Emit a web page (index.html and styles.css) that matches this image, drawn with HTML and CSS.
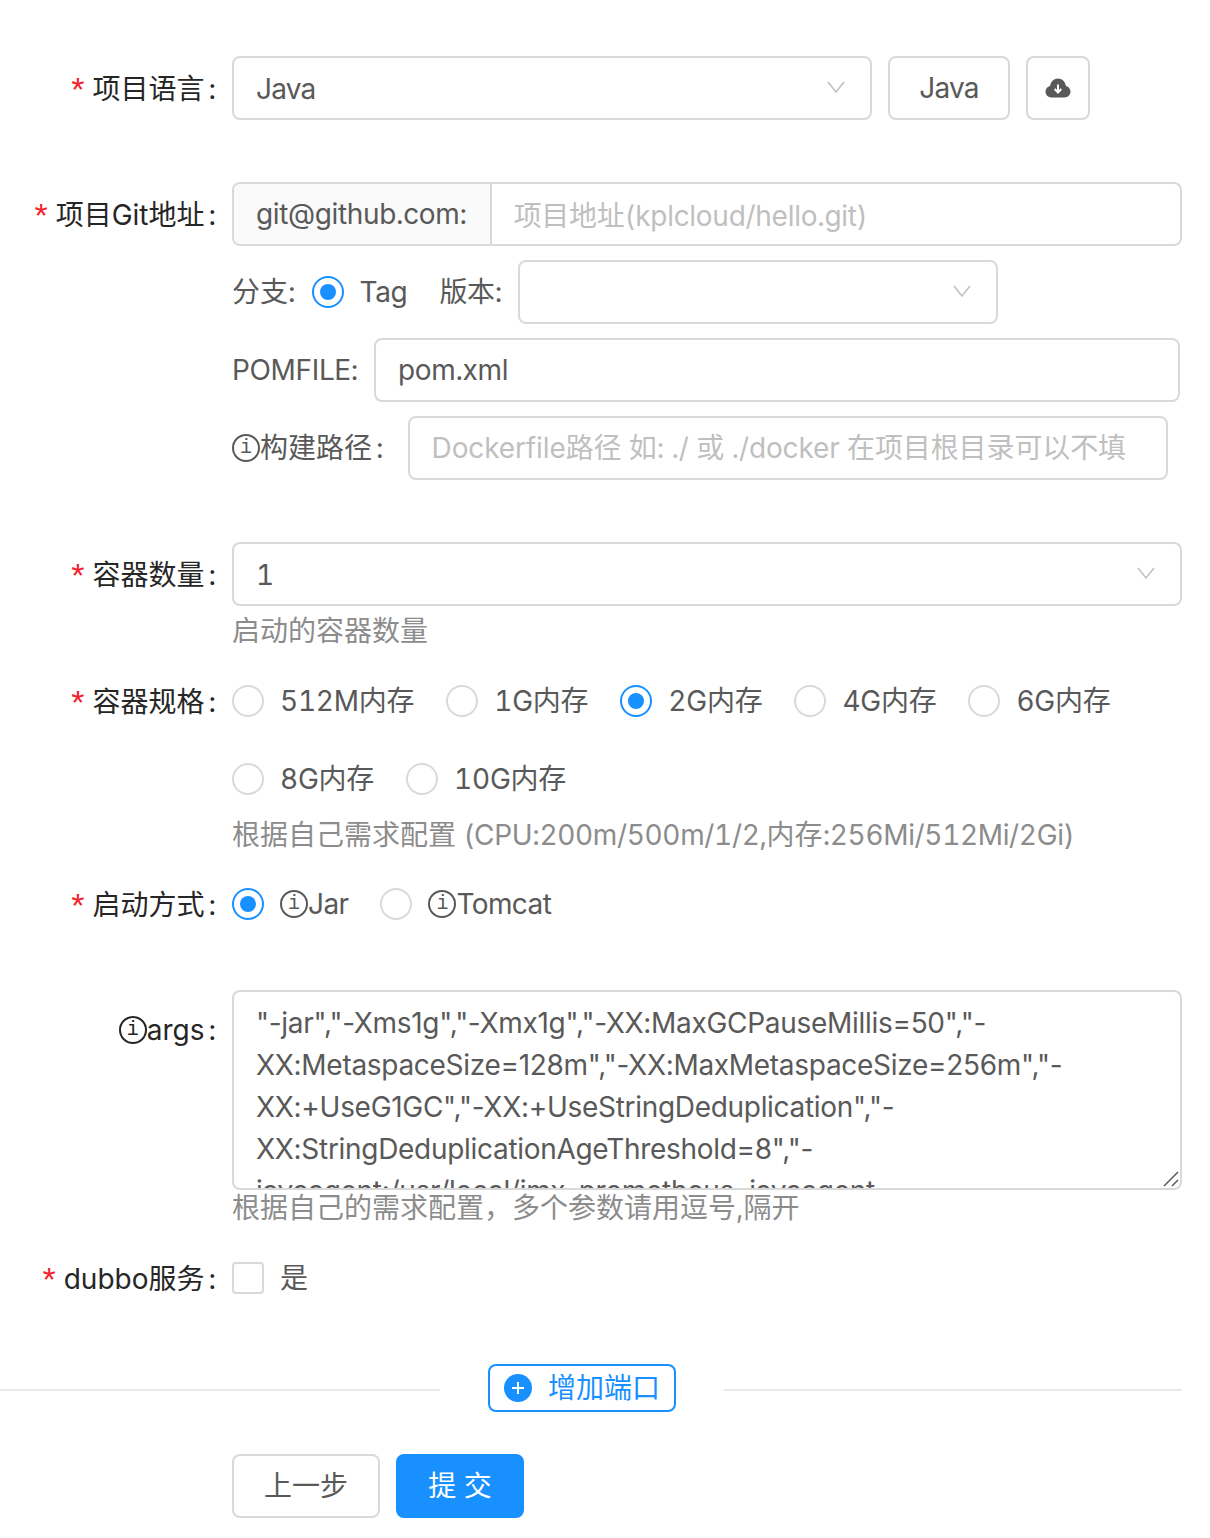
FILE: index.html
```html
<!DOCTYPE html>
<html lang="en">
<head>
    <meta charset="UTF-8">
    <meta name="viewport" content="width=device-width, initial-scale=1.0">
    <title>部署配置</title>
    <link rel="stylesheet" href="styles.css">
</head>
<body>

    <form class="form">
        <!-- 项目语言 -->
        <div class="item">
            <label class="item-label required">项目语言<span class="colon">:</span></label>
            <div class="item-control row">
                <div class="select select-lang">
                    <span class="java">Java</span>
                    <svg class="arrow" viewBox="0 0 18 12"><polyline points="1 1 9 11 17 1"></polyline></svg>
                </div>
                <button type="button" class="btn btn-lang"><span class="java">Java</span></button>
                <button type="button" class="btn btn-icon" aria-label="download">
                    <svg class="cloud" viewBox="0 0 26 20">
                        <path class="cloud-body" d="M6.5 19.5C3 19.5 .5 16.8 .5 13.6c0-2.8 1.9-5 4.5-5.6C5.8 3.6 9 .5 13 .5s7.2 3.1 8 7.5c2.6.6 4.5 2.8 4.5 5.6 0 3.2-2.5 5.900-6 5.900z"></path>
                        <path class="cloud-arrow" d="M13 6.500v7.500M9.700 11 13 14.500 16.300 11"></path>
                    </svg>
                </button>
            </div>
        </div>

        <!-- Git 地址 -->
        <div class="item">
            <label class="item-label required">项目Git地址<span class="colon">:</span></label>
            <div class="item-control stack">
                <div class="input-group">
                    <span class="addon tight">git@github.com:</span>
                    <input class="input" type="text" placeholder="项目地址(kplcloud/hello.git)">
                </div>
                <div class="row">
                    <span class="inline-label">分支:</span>
                    <span class="radio checked"><i></i><span class="tight">Tag</span></span>
                    <span class="inline-label version-label tight">版本:</span>
                    <div class="select select-version">
                        <span></span>
                        <svg class="arrow" viewBox="0 0 18 12"><polyline points="1 1 9 11 17 1"></polyline></svg>
                    </div>
                </div>
                <div class="row">
                    <span class="inline-label tight">POMFILE:</span>
                    <input class="input pom-input tight" type="text" value="pom.xml">
                </div>
                <div class="row">
                    <span class="inline-label build-label"><span class="info">i</span>构建路径<span class="colon">:</span></span>
                    <input class="input build-input" type="text" placeholder="Dockerfile路径 如: ./ 或 ./docker 在项目根目录可以不填">
                </div>
            </div>
        </div>

        <!-- 容器数量 -->
        <div class="item item-count">
            <label class="item-label required">容器数量<span class="colon">:</span></label>
            <div class="item-control">
                <div class="select">
                    <span>1</span>
                    <svg class="arrow" viewBox="0 0 18 12"><polyline points="1 1 9 11 17 1"></polyline></svg>
                </div>
                <div class="help">启动的容器数量</div>
            </div>
        </div>

        <!-- 容器规格 -->
        <div class="item item-spec">
            <label class="item-label required">容器规格<span class="colon">:</span></label>
            <div class="item-control">
                <div class="radio-group spec-group">
                    <span class="radio"><i></i>512M内存</span>
                    <span class="radio"><i></i>1G内存</span>
                    <span class="radio checked"><i></i>2G内存</span>
                    <span class="radio"><i></i>4G内存</span>
                    <span class="radio"><i></i>6G内存</span>
                    <span class="radio"><i></i>8G内存</span>
                    <span class="radio"><i></i>10G内存</span>
                </div>
                <div class="help help-spec">根据自己需求配置 <span class="tight">(CPU:200m/500m/1/2,</span>内存<span class="tight">:256Mi/512Mi/2Gi)</span></div>
            </div>
        </div>

        <!-- 启动方式 -->
        <div class="item item-start">
            <label class="item-label required">启动方式<span class="colon">:</span></label>
            <div class="item-control">
                <div class="radio-group start-group">
                    <span class="radio checked"><i></i><span class="info">i</span>Jar</span>
                    <span class="radio"><i></i><span class="info">i</span>Tomcat</span>
                </div>
            </div>
        </div>

        <!-- args -->
        <div class="item item-args">
            <label class="item-label"><span class="info">i</span>args<span class="colon">:</span></label>
            <div class="item-control">
                <div class="textarea-wrap">
                    <textarea class="textarea">"-jar","-Xms1g","-Xmx1g","-XX:MaxGCPauseMillis=50","-XX:MetaspaceSize=128m","-XX:MaxMetaspaceSize=256m","-XX:+UseG1GC","-XX:+UseStringDeduplication","-XX:StringDeduplicationAgeThreshold=8","-javaagent:/usr/local/jmx_prometheus_javaagent-0.12.0.jar=9136:/etc/jmx.yaml"</textarea>
                    <svg class="grip" viewBox="0 0 16 16"><path d="M1 15 15 1M9 15l6-6"></path></svg>
                </div>
                <div class="help help-args">根据自己的需求配置，多个参数请用逗号,隔开</div>
            </div>
        </div>

        <!-- dubbo -->
        <div class="item item-dubbo">
            <label class="item-label required">dubbo服务<span class="colon">:</span></label>
            <div class="item-control">
                <span class="checkbox"><i></i>是</span>
            </div>
        </div>

        <!-- 端口 -->
        <div class="divider">
            <span class="divider-line divider-left"></span>
            <button type="button" class="btn-dashed">
                <svg class="plus" viewBox="0 0 28 28">
                    <circle cx="14" cy="14" r="14"></circle>
                    <path d="M14 8v12M8 14h12"></path>
                </svg>
                增加端口
            </button>
            <span class="divider-line"></span>
        </div>

        <div class="actions">
            <button type="button" class="btn btn-prev">上一步</button>
            <button type="button" class="btn btn-primary">提 交</button>
        </div>
    </form>

</body>
</html>
```

FILE: styles.css
```css
/* Base */
* {
    box-sizing: border-box;
}

body {
    margin: 0;
    background: #fff;
    color: #595959;
    font-family: "Inter", "Noto Sans CJK SC", sans-serif;
    font-size: 28px;
    font-variant-numeric: tabular-nums;
    line-height: 42px;
}

.form {
    width: 1182px;
    padding-top: 56px;
}

.tight {
    letter-spacing: -0.35px;
}

.java {
    letter-spacing: -0.8px;
}

/* Form items */
.item {
    display: flex;
    margin-bottom: 62px;
}

.item.item-count {
    margin-bottom: 17px;
}

.item.item-spec {
    margin-bottom: 16px;
}

.item.item-start {
    margin-bottom: 54px;
}

.item.item-args {
    margin-bottom: 17px;
}

.item.item-dubbo {
    margin-bottom: 54px;
}

.item-label {
    flex: 0 0 232px;
    height: 64px;
    padding-top: 2px;
    display: flex;
    align-items: center;
    justify-content: flex-end;
    color: #262626;
    white-space: nowrap;
}

.item-label.required::before {
    content: "*";
    margin-right: 8px;
    color: #f5222d;
    font-family: "Liberation Sans", sans-serif;
    font-size: 34px;
}

.item-args .item-label {
    padding-top: 0;
    height: 80px;
}

.colon {
    margin: 0 16px 0 4px;
}

.item-control {
    flex: 1;
    min-width: 0;
}

.row {
    display: flex;
    align-items: center;
    gap: 16px;
}

.stack {
    display: flex;
    flex-direction: column;
    gap: 14px;
}

/* circled i in front of some labels */
.info {
    display: inline-flex;
    align-items: center;
    justify-content: center;
    flex: none;
    width: 28px;
    height: 28px;
    border: 2px solid currentColor;
    border-radius: 50%;
    font-family: "Liberation Mono", monospace;
    font-size: 20px;
    line-height: 1;
    letter-spacing: 0;
    vertical-align: -5px;
}

/* Select */
.select {
    display: flex;
    align-items: center;
    justify-content: space-between;
    height: 64px;
    padding: 2px 25px 0 22px;
    border: 2px solid #d9d9d9;
    border-radius: 8px;
}

.select-lang {
    width: 640px;
}

.select-version {
    width: 480px;
}

.arrow {
    width: 18px;
    height: 12px;
    margin-top: -4px;
    fill: none;
    stroke: #bfbfbf;
    stroke-width: 1.500;
}

/* Buttons */
.btn {
    height: 64px;
    padding: 0 30px;
    border: 2px solid #d9d9d9;
    border-radius: 8px;
    background: #fff;
    color: #595959;
    font: inherit;
}

.btn-lang {
    width: 122px;
    padding: 0;
}

.btn-icon {
    width: 64px;
    padding: 0;
    display: flex;
    align-items: center;
    justify-content: center;
}

.cloud {
    width: 26px;
    height: 20px;
}

.cloud-body {
    fill: #595959;
}

.cloud-arrow {
    fill: none;
    stroke: #fff;
    stroke-width: 2;
}

.btn-prev {
    width: 148px;
}

.btn-primary {
    width: 128px;
    border-color: #1890ff;
    background: #1890ff;
    color: #fff;
}

/* Inputs */
.input-group {
    display: flex;
    height: 64px;
    border: 2px solid #d9d9d9;
    border-radius: 8px;
}

.addon {
    display: flex;
    align-items: center;
    padding: 0 23px 0 22px;
    border-right: 2px solid #d9d9d9;
    border-radius: 6px 0 0 6px;
    background: #fafafa;
}

.input {
    height: 64px;
    padding: 0 22px;
    border: 2px solid #d9d9d9;
    border-radius: 8px;
    color: #595959;
    font: inherit;
    outline: none;
}

.input::placeholder {
    color: #bfbfbf;
    opacity: 1;
}

.input-group .input {
    flex: 1;
    min-width: 0;
    height: 60px;
    padding-top: 4px;
    border: 0;
    background: transparent;
    letter-spacing: -0.28px;
}

.inline-label {
    white-space: nowrap;
}

.version-label {
    margin-left: 16px;
}

.pom-input {
    width: 806px;
}

.build-label {
    display: inline-flex;
    align-items: center;
}

.build-label .colon {
    margin-right: 8px;
}

.build-input {
    width: 760px;
    letter-spacing: -0.12px;
}

/* Radio and checkbox */
.radio-group {
    display: flex;
    flex-wrap: wrap;
    gap: 14px 32px;
}

.spec-group {
    letter-spacing: -0.25px;
}

.start-group {
    letter-spacing: -0.6px;
}

.radio {
    display: inline-flex;
    align-items: center;
    height: 64px;
    white-space: nowrap;
}

.radio i {
    position: relative;
    width: 32px;
    height: 32px;
    margin-right: 16px;
    border: 2px solid #d9d9d9;
    border-radius: 50%;
}

.radio.checked i {
    border-color: #1890ff;
}

.radio.checked i::after {
    content: "";
    position: absolute;
    top: 6px;
    left: 6px;
    width: 16px;
    height: 16px;
    border-radius: 50%;
    background: #1890ff;
}

.checkbox {
    display: flex;
    align-items: center;
    height: 64px;
}

.checkbox i {
    width: 32px;
    height: 32px;
    margin-right: 16px;
    border: 2px solid #d9d9d9;
    border-radius: 4px;
}

/* Textarea */
.textarea-wrap {
    position: relative;
}

.textarea {
    display: block;
    width: 100%;
    height: 200px;
    padding: 10px 22px;
    border: 2px solid #d9d9d9;
    border-radius: 8px;
    color: #595959;
    font: inherit;
    font-variant-numeric: normal;
    letter-spacing: -0.3px;
    line-height: 42px;
    overflow: hidden;
    resize: none;
    outline: none;
}

.grip {
    position: absolute;
    right: 3px;
    bottom: 3px;
    width: 16px;
    height: 16px;
    fill: none;
    stroke: #595959;
    stroke-width: 1.500;
}

/* Help text */
.help {
    color: #8c8c8c;
    height: 42px;
    margin-top: 4px;
}

.help-spec {
    margin-top: 3px;
}

.help-args {
    margin-top: -3px;
}

/* Divider with add button */
.divider {
    display: flex;
    align-items: center;
    gap: 48px;
    margin-bottom: 42px;
}

.divider-line {
    flex: 1;
    height: 2px;
    margin-top: 4px;
    background: #e8e8e8;
}

.divider-left {
    flex: 0 0 440px;
}

.btn-dashed {
    display: flex;
    align-items: center;
    width: 188px;
    height: 48px;
    padding: 0 14px;
    border: 2px solid #1890ff;
    border-radius: 8px;
    background: #fff;
    color: #1890ff;
    font: inherit;
}

.plus {
    width: 28px;
    height: 28px;
    margin-right: 16px;
}

.plus circle {
    fill: #1890ff;
}

.plus path {
    fill: none;
    stroke: #fff;
    stroke-width: 2;
}

/* Bottom actions */
.actions {
    display: flex;
    gap: 16px;
    padding-left: 232px;
}
```
